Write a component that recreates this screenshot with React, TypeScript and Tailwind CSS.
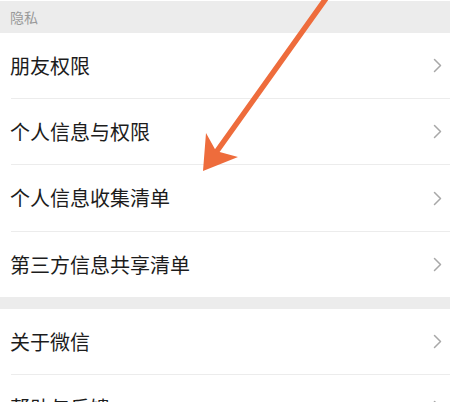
import React from "react";

const Chevron = () => (
  <svg width="9" height="15" viewBox="0 0 9 15" fill="none">
    <path d="M1.5 1.5 L7.5 7.5 L1.5 13.5" stroke="#a8a8a8" strokeWidth="1.5" strokeLinecap="round" strokeLinejoin="round" />
  </svg>
);

const Row = ({ label, h, divider }: { label: string; h: string; divider: boolean }) => (
  <div className="pl-[11px] bg-white">
    <div className={`${h} flex items-center justify-between pr-[8px] ${divider ? "border-b border-[#ececec]" : ""}`}>
      <span className="text-[20px] leading-none text-[#1c1c1c] -ml-[1px]">{label}</span>
      <Chevron />
    </div>
  </div>
);

export default function App() {
  return (
    <div
      className="relative w-[450px] h-[402px] overflow-hidden bg-white"
      style={{ fontFamily: '"Noto Sans CJK SC", "Noto Sans", sans-serif' }}
    >
      <div className="h-[33px] bg-[#ececec] flex items-center pl-[10px] text-[14px] text-[#9a9a9a] border-t border-white">
        隐私
      </div>
      <Row label="朋友权限" h="h-[66px]" divider />
      <Row label="个人信息与权限" h="h-[66px]" divider />
      <Row label="个人信息收集清单" h="h-[67px]" divider />
      <Row label="第三方信息共享清单" h="h-[65px]" divider={false} />
      <div className="h-[12px] bg-[#ececec]" />
      <Row label="关于微信" h="h-[66px]" divider />
      <Row label="帮助与反馈" h="h-[66px]" divider />

      <svg className="absolute left-0 top-0" width="450" height="402" viewBox="0 0 450 402">
        <line x1="327" y1="-3" x2="217" y2="151" stroke="#ee6c3c" strokeWidth="5.5" strokeLinecap="round" />
        <polygon points="203,171 206,133 216,151 238,157" fill="#ee6c3c" />
      </svg>
    </div>
  );
}
